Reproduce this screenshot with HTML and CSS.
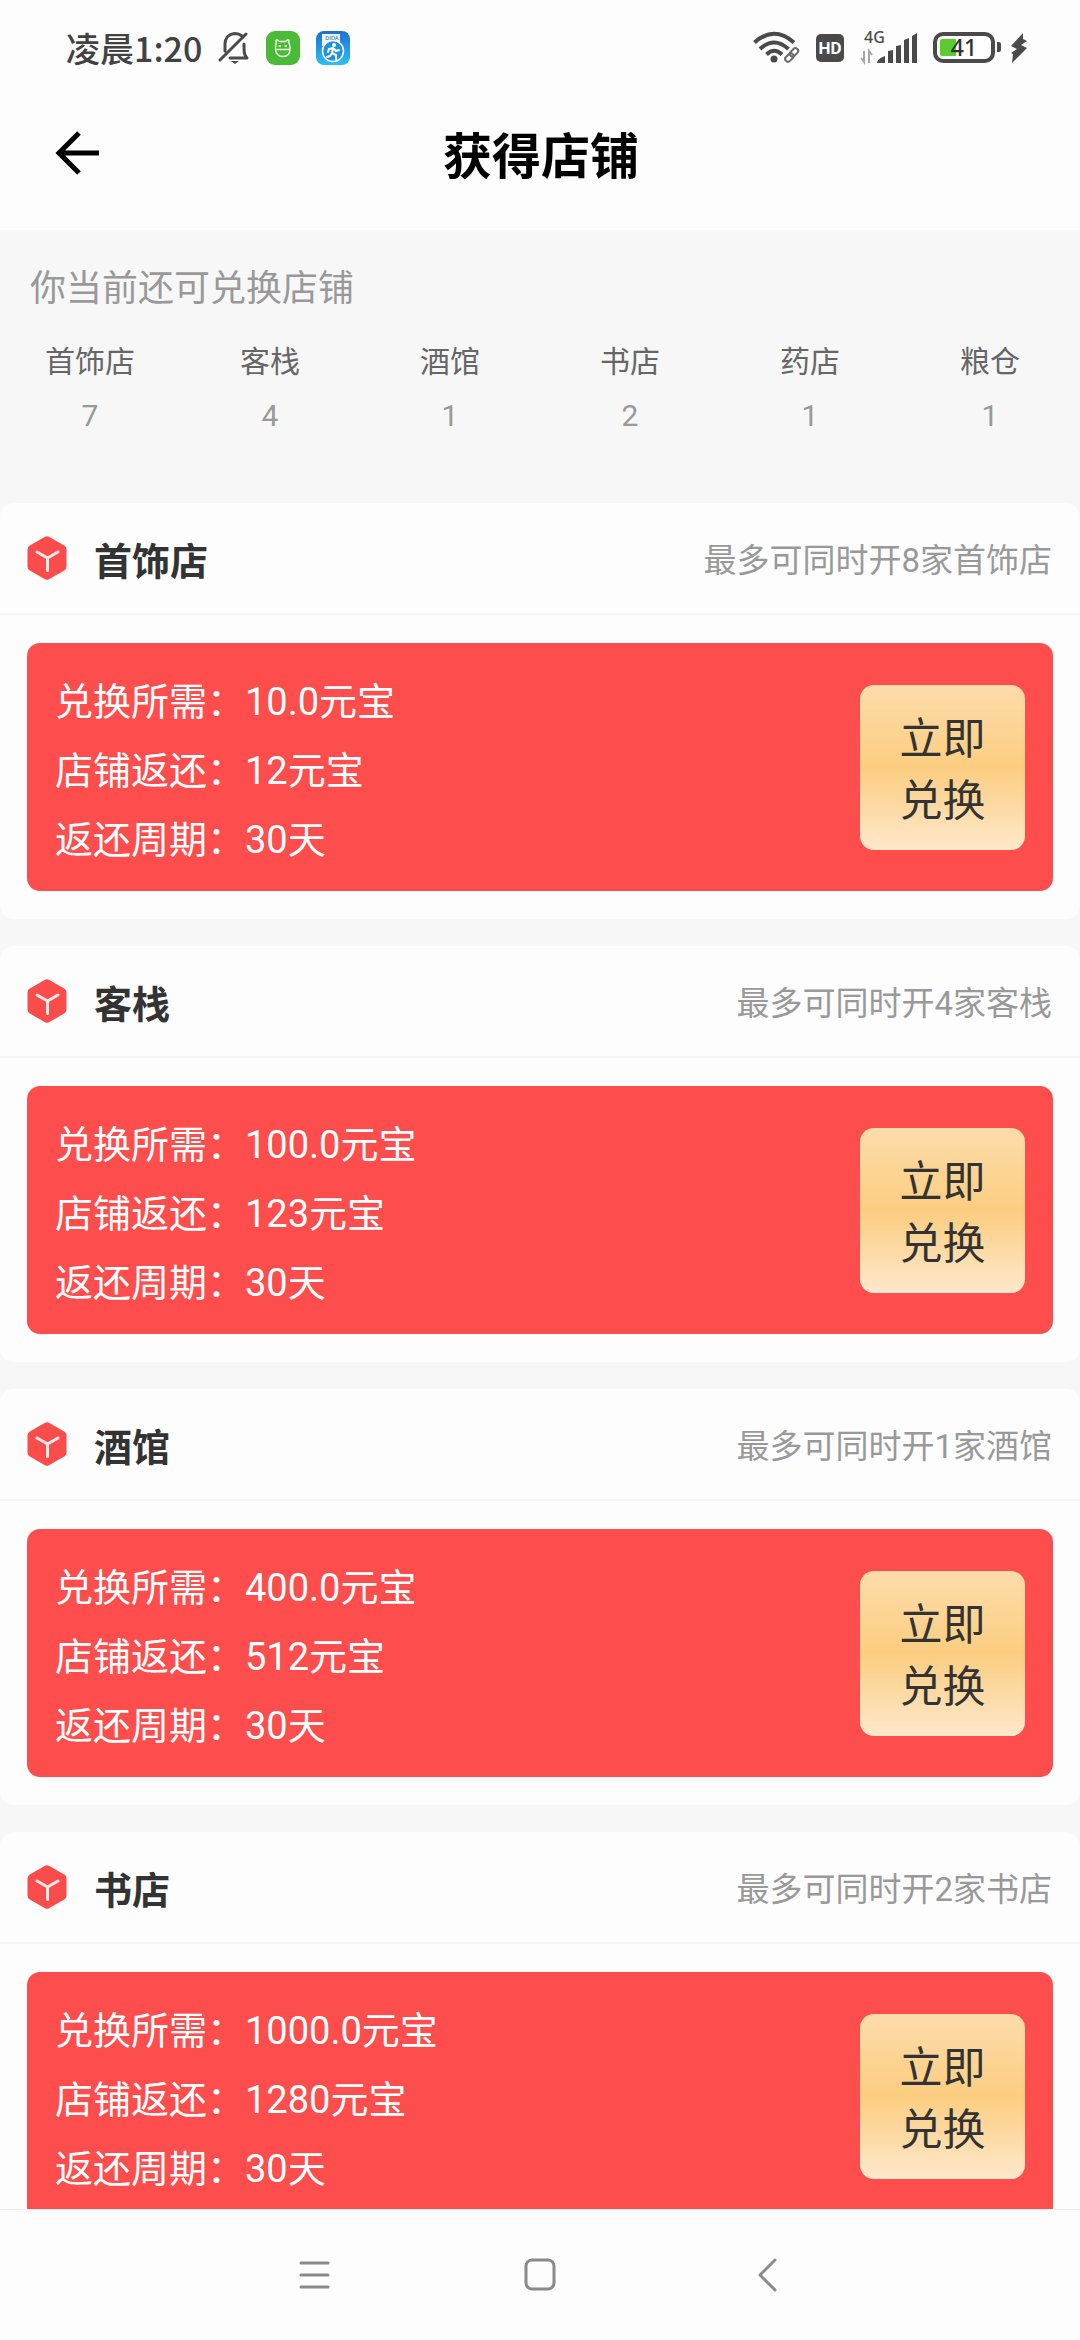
FILE: index.html
```html
<!DOCTYPE html>
<html lang="zh-CN">
<head>
<meta charset="utf-8">
<meta name="viewport" content="width=device-width, initial-scale=1">
<title>获得店铺</title>
<link rel="stylesheet" href="styles.css">
</head>
<body>
<svg class="defs" aria-hidden="true">
  <symbol id="cube" viewBox="0 0 40 44">
    <path d="M18 .8q2-1.100 4 0l15.200 8.600q2.300 1.300 2.300 3.800v17.600q0 2.500-2.300 3.800L22 43.200q-2 1.100-4 0L2.800 34.600Q.5 33.300.5 30.800V13.200q0-2.500 2.300-3.800z" fill="#fb4c4c"/>
    <path d="M10 16l10.500 6 10.500-6M20.500 22v12.500" fill="none" stroke="#ffe9e9" stroke-width="3" stroke-linecap="round" stroke-linejoin="round"/>
  </symbol>
</svg>
<div class="status">
  <div class="status-side">
    <span class="clock">凌晨1:20</span>
    <svg class="bell" width="32" height="34" viewBox="0 0 32 34" fill="none" stroke="#4a4a4a" stroke-width="3" stroke-linecap="round" stroke-linejoin="round">
      <path d="M24 5Q21 2.500 17 2.500C10 3 7 8 7 13v7M12 27h17c-3-3-3-6-3-14M2 29L28 3"/><path d="M13 30h8l-4 3z" fill="#4a4a4a" stroke="none"/>
    </svg>
    <svg class="app" width="34" height="34" viewBox="0 0 34 34">
      <rect width="34" height="34" rx="9" fill="#4bba37"/>
      <path d="M10.500 11.500q-1.500-3 1-2.500l2 1.500h6l2-1.500q2.500-.5 1 2.500 1.500 1.500 1.500 6.500 0 7.500-7 7.500t-7.500-7.500q0-5 1-6.500zM9 18.500h15.500" fill="none" stroke="#eaffe5" stroke-width="1.400"/><path d="M12.500 15H15M18.500 15H21" stroke="#eaffe5" stroke-width="1.500"/>
    </svg>
    <svg class="app" width="34" height="34" viewBox="0 0 34 34">
      <defs><linearGradient id="sky" x2="0" y2="1"><stop stop-color="#1f6fd0"/><stop offset="1" stop-color="#2cc0f2"/></linearGradient></defs>
      <rect width="34" height="34" rx="8" fill="url(#sky)"/>
      <path d="M6 3h18v12H6z" fill="#e9f5fc"/>
      <text x="16" y="9" text-anchor="middle" class="tiny">DIDA</text>
      <circle cx="17" cy="20" r="10.500" fill="#2392dc" stroke="#fff" stroke-width="1.500"/>
      <circle cx="18" cy="14" r="2" fill="#fff"/>
      <path d="M17 17l-4 1-1 3M17 17l3 3 3-1M17 17l-1 5 4 2v4M16 22l-2 3-3 1" fill="none" stroke="#fff" stroke-width="2" stroke-linecap="round" stroke-linejoin="round"/>
    </svg>
  </div>
  <div class="status-side">
    <svg width="48" height="34" viewBox="0 0 48 34" fill="none" stroke="#4a4a4a" stroke-width="4">
      <path d="M1.500 11.500Q21-6 41 11.500M7 18Q21 5 35.500 18M13.500 23.500Q21 16 29 23.500"/><circle cx="21" cy="28" r="3.500" fill="#4a4a4a" stroke="none"/>
      <g stroke-width="4.500" stroke="#fdfdfd"><rect x="38" y="17" width="5" height="9" rx="2.500" transform="rotate(45 40.500 21.500)"/></g>
      <g stroke-width="2" stroke="#6a6a6a"><rect x="38.500" y="16.500" width="5.500" height="9.500" rx="2.700" transform="rotate(45 41 21)"/><rect x="33.500" y="21.500" width="5.500" height="9.500" rx="2.700" transform="rotate(45 36 26.500)"/></g>
    </svg>
    <svg class="hd" width="28" height="28" viewBox="0 0 28 28"><rect width="28" height="28" rx="5" fill="#4a4a4a"/><text x="14" y="20" text-anchor="middle" class="hd-text">HD</text></svg>
    <svg class="signal" width="58" height="34" viewBox="0 0 58 34">
      <text x="4" y="12" class="net">4G</text>
      <path d="M4 20v11l-3-4M9 32V20l3 4" fill="none" stroke="#a5a5a5" stroke-width="2"/>
      <path d="M17 32q0-4 8-7v7zM28 32V20l5-1v13zM36 32V15l5-1v18zM44 32V9l5-2v25zM52 32V5l5-3v30z" fill="#4a4a4a"/>
    </svg>
    <svg class="battery" width="68" height="32" viewBox="0 0 68 32">
      <rect x="2" y="2" width="58" height="27" rx="8" fill="#fff" stroke="#4a4a4a" stroke-width="4"/><path d="M9 7h14v17H9q-2 0-2-2V9q0-2 2-2z" fill="#5bcb30"/><path d="M64 10h2q2 0 2 2v6q0 2-2 2h-2z" fill="#4a4a4a"/>
      <text x="31" y="24" text-anchor="middle" class="charge">41</text>
    </svg>
    <svg width="18" height="32" viewBox="0 0 18 32"><path d="M13 1L1 14l6 3-6 4 2 1-1 9 15-15-6-3 6-4-4-2z" fill="#4a4a4a"/></svg>
  </div>
</div>
<header class="header">
  <button class="back" aria-label="返回"><svg width="46" height="46" viewBox="0 0 46 46" fill="none" stroke="#000" stroke-width="5"><path d="M25 3L5 23l20 20M5 23h40"/></svg></button>
  <h1>获得店铺</h1>
</header>
<section class="quota">
  <h2>你当前还可兑换店铺</h2>
  <dl>
    <div><dt>首饰店</dt><dd>7</dd></div>
    <div><dt>客栈</dt><dd>4</dd></div>
    <div><dt>酒馆</dt><dd>1</dd></div>
    <div><dt>书店</dt><dd>2</dd></div>
    <div><dt>药店</dt><dd>1</dd></div>
    <div><dt>粮仓</dt><dd>1</dd></div>
  </dl>
</section>
<main class="shops">
  <article class="shop">
    <div class="shop-head"><svg class="cube"><use href="#cube"/></svg><h3>首饰店</h3><span>最多可同时开8家首饰店</span></div>
    <div class="offer"><div class="terms"><p>兑换所需：10.0元宝</p><p>店铺返还：12元宝</p><p>返还周期：30天</p></div><button class="redeem">立即<br>兑换</button></div>
  </article>
  <article class="shop">
    <div class="shop-head"><svg class="cube"><use href="#cube"/></svg><h3>客栈</h3><span>最多可同时开4家客栈</span></div>
    <div class="offer"><div class="terms"><p>兑换所需：100.0元宝</p><p>店铺返还：123元宝</p><p>返还周期：30天</p></div><button class="redeem">立即<br>兑换</button></div>
  </article>
  <article class="shop">
    <div class="shop-head"><svg class="cube"><use href="#cube"/></svg><h3>酒馆</h3><span>最多可同时开1家酒馆</span></div>
    <div class="offer"><div class="terms"><p>兑换所需：400.0元宝</p><p>店铺返还：512元宝</p><p>返还周期：30天</p></div><button class="redeem">立即<br>兑换</button></div>
  </article>
  <article class="shop">
    <div class="shop-head"><svg class="cube"><use href="#cube"/></svg><h3>书店</h3><span>最多可同时开2家书店</span></div>
    <div class="offer"><div class="terms"><p>兑换所需：1000.0元宝</p><p>店铺返还：1280元宝</p><p>返还周期：30天</p></div><button class="redeem">立即<br>兑换</button></div>
  </article>
</main>
<nav class="system">
  <button aria-label="最近任务"><svg width="32" height="34" viewBox="0 0 32 34" fill="none" stroke="#8a8a8a" stroke-width="3" stroke-linecap="round"><path d="M3 5h27M3 17h27M3 29h27"/></svg></button>
  <button aria-label="主屏幕"><svg width="32" height="34" viewBox="0 0 32 34" fill="none" stroke="#8a8a8a" stroke-width="3"><rect x="2" y="2" width="28" height="29" rx="6"/></svg></button>
  <button aria-label="后退"><svg width="32" height="34" viewBox="0 0 32 34" fill="none" stroke="#8a8a8a" stroke-width="3" stroke-linecap="round" stroke-linejoin="round"><path d="M25 2L10 17l15 15"/></svg></button>
</nav>
</body>
</html>
```
FILE: styles.css
```css
* { box-sizing: border-box; margin: 0; padding: 0; }

body {
  display: flex;
  flex-direction: column;
  height: 100vh;
  overflow: hidden;
  background: #f7f7f7;
  color: #333;
  font-family: Roboto, "Noto Sans CJK SC", sans-serif;
}

button { border: 0; background: none; font: inherit; color: inherit; }
svg { display: block; flex: none; overflow: visible; }
.defs { position: absolute; width: 0; height: 0; }

/* system status bar */
.status {
  display: flex;
  flex: none;
  justify-content: space-between;
  height: 96px;
  padding: 0 52px 0 66px;
  background: #fdfdfd;
}
.status-side { display: flex; align-items: center; }
.clock {
  color: #424242;
  font-family: "Noto Sans CJK SC", sans-serif;
  font-size: 34px;
  font-weight: 500;
  line-height: 48px;
}
.bell { margin-left: 16px; }
.app { margin-left: 16px; }
.tiny { font: 6px Roboto, sans-serif; fill: #31729f; }
.hd { margin-left: 15px; }
.hd-text { font: 700 17px Roboto, sans-serif; fill: #fff; }
.signal { margin-left: 16px; }
.net { font: 500 16px "Noto Sans", sans-serif; fill: #4a4a4a; }
.battery { margin: 0 9px 0 15px; }
.charge { font: 500 23px "Noto Sans", sans-serif; fill: #333; }

/* title bar */
.header {
  display: grid;
  flex: none;
  grid-template-columns: 1fr auto 1fr;
  align-items: start;
  height: 134px;
  padding: 26px 52px 0 54px;
  background: #fdfdfd;
}
.back { justify-self: start; padding-top: 8px; }
.header h1 {
  color: #000;
  font-size: 49px;
  font-weight: 700;
  line-height: 72px;
}

/* remaining quota */
.quota { flex: none; height: 273px; padding-top: 35px; }
.quota h2 {
  padding-left: 30px;
  color: #999;
  font-size: 36px;
  font-weight: 400;
  line-height: 48px;
}
.quota dl {
  display: grid;
  grid-template-columns: repeat(6, 1fr);
  padding-top: 22px;
  font-size: 30px;
  line-height: 54px;
  text-align: center;
}
.quota dt { color: #666; }
.quota dd { color: #999; }

/* shop cards */
.shops {
  display: flex;
  flex: 1;
  flex-direction: column;
  gap: 27px;
  min-height: 0;
  overflow: hidden;
}
.shop { flex: none; padding-bottom: 28px; border-radius: 14px; background: #fdfdfd; }
.shop-head {
  display: flex;
  align-items: center;
  height: 112px;
  padding: 0 28px 0 27px;
  border-bottom: 2px solid #f5f5f5;
}
.cube { width: 40px; height: 44px; }
.shop-head h3 { padding-left: 27px; font-size: 38px; font-weight: 700; }
.shop-head span { margin-left: auto; color: #999; font-size: 33px; }
.offer {
  display: flex;
  align-items: center;
  justify-content: space-between;
  height: 248px;
  margin: 28px 27px 0;
  padding: 0 28px;
  border-radius: 13px;
  background: #fd4d4d;
}
.terms { padding-top: 8px; color: #fff; font-size: 38px; line-height: 69px; }
.redeem {
  width: 165px;
  height: 165px;
  padding-top: 6px;
  border-radius: 14px;
  background: linear-gradient(#fddcab, #fbcd80 50%, #fee8cb);
  font-size: 43px;
  line-height: 62px;
}

/* system navigation */
.system {
  display: flex;
  flex: none;
  align-items: center;
  justify-content: center;
  gap: 194px;
  height: 131px;
  border-top: 1px solid #eee;
  background: #fdfdfd;
}
```
